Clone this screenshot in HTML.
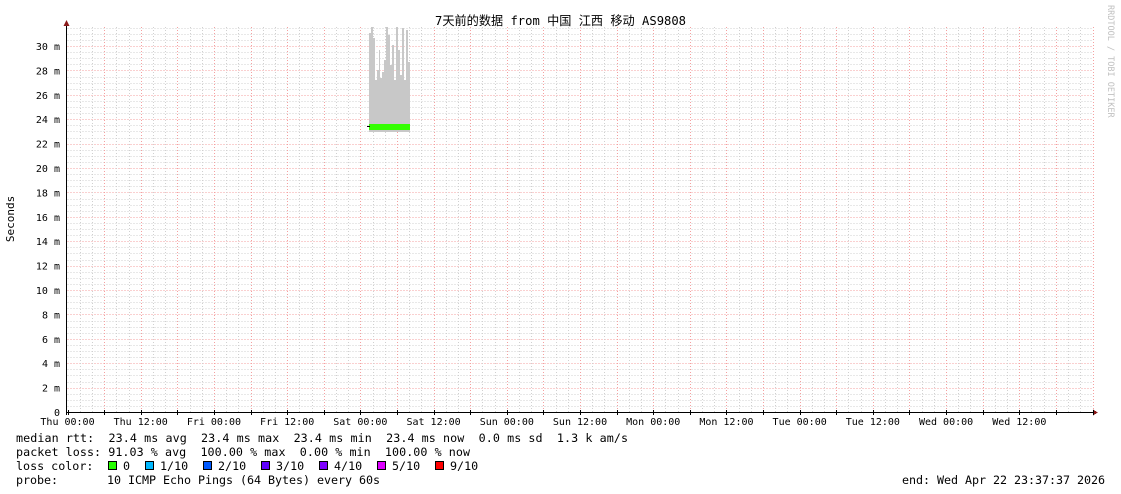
<!DOCTYPE html>
<html><head><meta charset="utf-8"><style>
html,body{margin:0;padding:0;background:#fff;width:1121px;height:494px;overflow:hidden}
svg{display:block}
text{font-family:"DejaVu Sans Mono","Liberation Mono","Noto Sans CJK SC",monospace;fill:#000}
</style></head><body>
<svg width="1121" height="494" xmlns="http://www.w3.org/2000/svg">
<rect width="1121" height="494" fill="#fff"/>
<g id="grid" stroke-width="1" shape-rendering="crispEdges">
</g>
<g id="data" shape-rendering="crispEdges" fill="#c8c8c8">
<rect x="369" y="33" width="2" height="99"/>
<rect x="371" y="27" width="2" height="105"/>
<rect x="373" y="38" width="2" height="94"/>
<rect x="375" y="80" width="2" height="52"/>
<rect x="377" y="70" width="2" height="62"/>
<rect x="379" y="50" width="1" height="82"/>
<rect x="380" y="78" width="2" height="54"/>
<rect x="382" y="72" width="2" height="60"/>
<rect x="384" y="60" width="2" height="72"/>
<rect x="386" y="27" width="2" height="105"/>
<rect x="388" y="35" width="2" height="97"/>
<rect x="390" y="65" width="2" height="67"/>
<rect x="392" y="45" width="2" height="87"/>
<rect x="394" y="80" width="2" height="52"/>
<rect x="396" y="27" width="2" height="105"/>
<rect x="398" y="50" width="2" height="82"/>
<rect x="400" y="75" width="2" height="57"/>
<rect x="402" y="28" width="2" height="104"/>
<rect x="404" y="80" width="2" height="52"/>
<rect x="406" y="30" width="2" height="102"/>
<rect x="408" y="62" width="2" height="70"/>
<rect x="369" y="124" width="41" height="6" fill="#33ff00"/>
<rect x="367" y="126" width="3" height="1" fill="#000"/>
</g>
<text x="435" y="25" font-size="12.5" textLength="251" lengthAdjust="spacingAndGlyphs">7天前的数据 from 中国 江西 移动 AS9808</text>
<text transform="translate(14,219) rotate(-90)" font-size="11" text-anchor="middle">Seconds</text>
<text transform="translate(1108,5) rotate(90)" font-size="8.5" style="fill:#c0c0c0">RRDTOOL / TOBI OETIKER</text>
<g id="ylab" font-size="10" text-anchor="end"></g>
<g id="xlab" font-size="10" text-anchor="middle"></g>
<g font-size="11.7">
<text x="16" y="442" xml:space="preserve" textLength="612">median rtt:  23.4 ms avg  23.4 ms max  23.4 ms min  23.4 ms now  0.0 ms sd  1.3 k am/s</text>
<text x="16" y="456" xml:space="preserve" textLength="454">packet loss: 91.03 % avg  100.00 % max  0.00 % min  100.00 % now</text>
<text x="16" y="470" xml:space="preserve">loss color:  </text>
<text x="16" y="484" xml:space="preserve" textLength="364">probe:       10 ICMP Echo Pings (64 Bytes) every 60s</text>
<text x="902" y="484" xml:space="preserve" textLength="203">end: Wed Apr 22 23:37:37 2026</text>
<g shape-rendering="crispEdges" stroke="#000" stroke-width="1">
<rect x="108.5" y="461.5" width="8" height="8" fill="#26ff00"/>
<rect x="145.5" y="461.5" width="8" height="8" fill="#00b8ff"/>
<rect x="203.5" y="461.5" width="8" height="8" fill="#0059ff"/>
<rect x="261.5" y="461.5" width="8" height="8" fill="#5e00ff"/>
<rect x="319.5" y="461.5" width="8" height="8" fill="#7e00ff"/>
<rect x="377.5" y="461.5" width="8" height="8" fill="#dd00ff"/>
<rect x="435.5" y="461.5" width="8" height="8" fill="#ff0000"/>
</g>
<text x="123" y="470">0</text><text x="160" y="470">1/10</text><text x="218" y="470">2/10</text><text x="276" y="470">3/10</text><text x="334" y="470">4/10</text><text x="392" y="470">5/10</text><text x="450" y="470">9/10</text>
</g>
<g id="axes" shape-rendering="crispEdges"></g>
</svg>
<script>
var NS="http://www.w3.org/2000/svg";
function el(p,t,a,txt){var e=document.createElementNS(NS,t);for(var k in a)e.setAttribute(k,a[k]);if(txt!=null)e.textContent=txt;document.getElementById(p).appendChild(e);return e;}
var x0=67.5,x1=1093,y0=412,yt=27,pxh=1025/168,pxm=12.2;
for(var i=1;i*6.1<=y0-yt;i++){var y=Math.round(y0-i*6.1)+0.5;var maj=(i%4==0);
 el("grid","line",{x1:x0,x2:x1,y1:y,y2:y,stroke:maj?"#f4a0a0":"#d0d0d0","stroke-dasharray":"1,2"});}
for(var h=2;h<=168;h+=2){var x=Math.round(x0+h*pxh)+0.5;var maj=(h%6==0);
 el("grid","line",{x1:x,x2:x,y1:yt,y2:y0,stroke:maj?"#f4a0a0":"#d0d0d0","stroke-dasharray":"1,2"});}
for(var m=0;m<=30;m+=2){var y=y0-m*pxm;el("ylab","text",{x:60,y:y+4},m==0?"0":m+" m");}
var days=["Thu","Fri","Sat","Sun","Mon","Tue","Wed"];
for(var d=0;d<14;d++){var x=x0+d*12*pxh;el("xlab","text",{x:x,y:425},days[Math.floor(d/2)]+(d%2?" 12:00":" 00:00"));}
el("axes","line",{x1:66,x2:1094,y1:412.5,y2:412.5,stroke:"#000"});
el("axes","line",{x1:66.5,x2:66.5,y1:24,y2:415,stroke:"#000"});
el("axes","path",{d:"M1093 409.5 L1098 412.5 L1093 415.5Z",fill:"#8b1a1a"});
el("axes","path",{d:"M63.5 26 L66.5 20 L69.5 26Z",fill:"#8b1a1a"});
for(var h=0;h<=168;h+=6){var x=Math.round(x0+h*pxh)+0.5;el("axes","line",{x1:x,x2:x,y1:410,y2:415,stroke:"#000"});}
</script>
</body></html>
